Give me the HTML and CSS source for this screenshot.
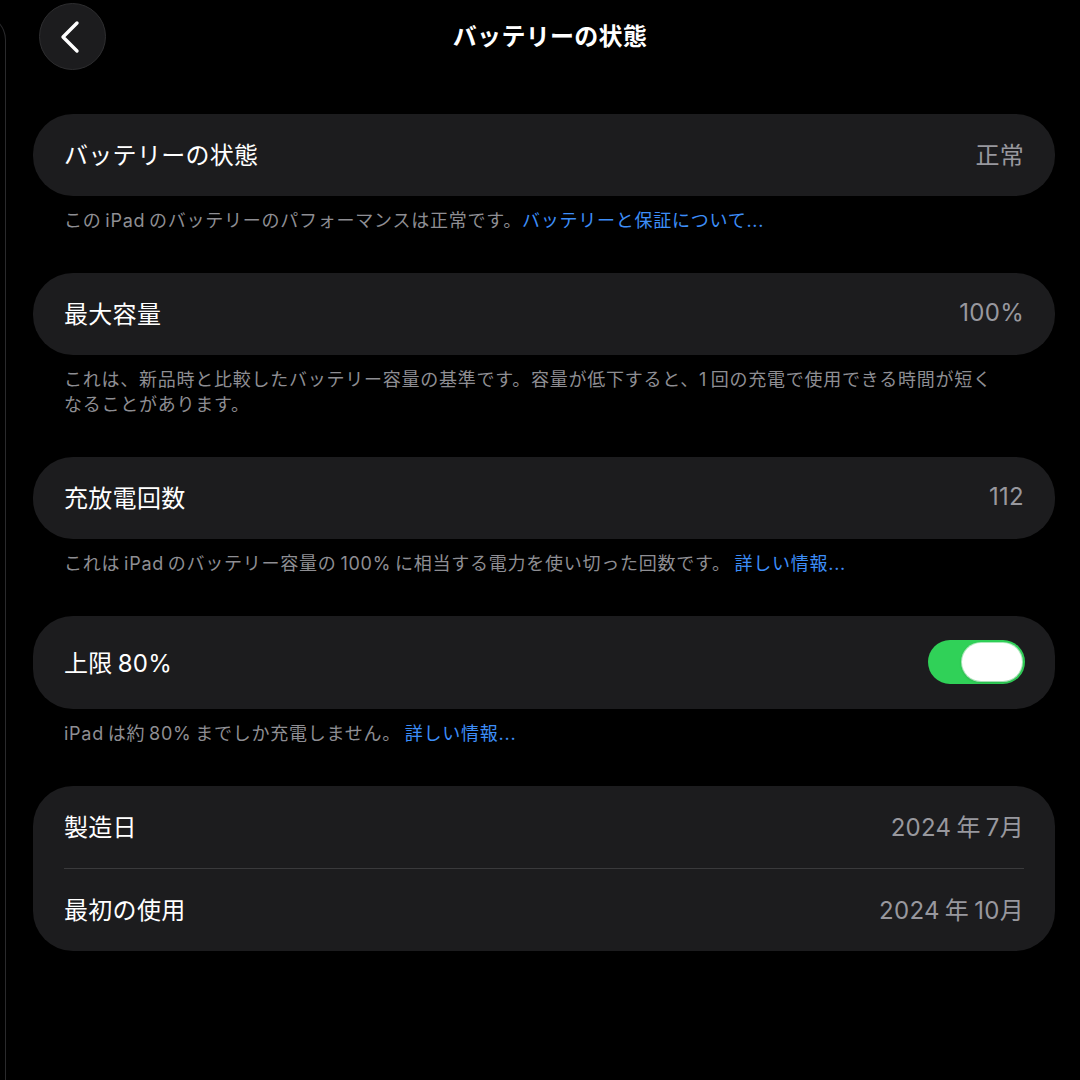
FILE: index.html
```html
<!DOCTYPE html>
<html lang="ja">
<head>
<meta charset="utf-8">
<title>バッテリーの状態</title>
<link rel="stylesheet" href="styles.css">
</head>
<body>
<div class="sidebar-edge"></div>
<main class="main">
  <header class="header">
    <div class="header-left">
      <button class="back-btn" aria-label="戻る">
        <svg width="24" height="34" viewBox="0 0 24 34"><path d="M18 3 L4 17 L18 31" fill="none" stroke="#fff" stroke-width="3.4" stroke-linecap="round" stroke-linejoin="round"/></svg>
      </button>
    </div>
    <h1 class="title">バッテリーの状態</h1>
    <div></div>
  </header>

  <div class="content">
    <section class="section">
      <div class="card">
        <div class="row"><span class="label">バッテリーの状態</span><span class="value">正常</span></div>
      </div>
      <p class="footer">この iPad のバッテリーのパフォーマンスは正常です。<span class="link">バッテリーと保証について...</span></p>
    </section>

    <section class="section">
      <div class="card">
        <div class="row"><span class="label">最大容量</span><span class="value">100%</span></div>
      </div>
      <p class="footer">これは、新品時と比較したバッテリー容量の基準です。容量が低下すると、1 回の充電で使用できる時間が短く<br>なることがあります。</p>
    </section>

    <section class="section">
      <div class="card">
        <div class="row"><span class="label">充放電回数</span><span class="value">112</span></div>
      </div>
      <p class="footer">これは iPad のバッテリー容量の 100% に相当する電力を使い切った回数です。 <span class="link">詳しい情報...</span></p>
    </section>

    <section class="section">
      <div class="card">
        <div class="row row-tall"><span class="label">上限 80%</span>
          <span class="toggle on"><span class="knob"></span></span>
        </div>
      </div>
      <p class="footer">iPad は約 80% までしか充電しません。 <span class="link">詳しい情報...</span></p>
    </section>

    <section class="section">
      <div class="card">
        <div class="row"><span class="label">製造日</span><span class="value">2024 年 7月</span></div>
        <div class="divider"></div>
        <div class="row"><span class="label">最初の使用</span><span class="value">2024 年 10月</span></div>
      </div>
    </section>
  </div>
</main>
</body>
</html>
```

FILE: styles.css
```css
* { box-sizing: border-box; }

html, body {
  margin: 0;
  padding: 0;
  background: #000;
  height: 100%;
}

body {
  display: flex;
  font-family: "Inter", "Noto Sans CJK JP", sans-serif;
  color: #fff;
  overflow: hidden;
}

.sidebar-edge {
  flex: 0 0 auto;
  width: 34px;
  margin-left: -28px;
  margin-top: 14px;
  border-top: 1.5px solid #2a2a2c;
  border-right: 1.5px solid #2a2a2c;
  border-top-right-radius: 26px;
  margin-right: 14px;
}

.main {
  flex: 1 1 auto;
  display: flex;
  flex-direction: column;
}

.header {
  display: grid;
  grid-template-columns: 1fr auto 1fr;
  align-items: center;
  height: 74px;
  padding-top: 3px;
  padding-bottom: 4px;
  margin-bottom: 40px;
}

.header-left {
  padding-left: 19px;
}

.back-btn {
  width: 67px;
  height: 67px;
  border-radius: 50%;
  background: #1c1c1e;
  border: 1px solid #2e2e30;
  display: flex;
  align-items: center;
  justify-content: center;
  padding: 0 4px 0 0;
  margin: 0;
  cursor: pointer;
}

.title {
  margin: 0 0 4px;
  font-size: 24px;
  font-weight: 700;
  letter-spacing: 0.3px;
  color: #fff;
}

.content {
  padding: 0 25px 0 13px;
  display: flex;
  flex-direction: column;
  gap: 40px;
}

.card {
  background: #1c1c1e;
  border-radius: 40px;
  padding: 0 31px;
}

.row {
  display: flex;
  align-items: center;
  justify-content: space-between;
  height: 82px;
  padding-bottom: 4px;
}

.row-tall {
  height: 93px;
  padding-bottom: 2px;
}

.label {
  font-size: 24px;
  color: #fff;
  letter-spacing: 0.3px;
  word-spacing: -2px;
}

.value {
  font-size: 24px;
  color: #98989e;
  letter-spacing: 0.3px;
  word-spacing: -2px;
}

.divider {
  height: 1px;
  background: #3a3a3c;
}

.footer {
  margin: 12px 0 0;
  padding-left: 31px;
  font-size: 18px;
  line-height: 25px;
  color: #8e8e93;
  letter-spacing: 0.75px;
  word-spacing: -2px;
}

.link {
  color: #3d8ef8;
}

.toggle {
  position: relative;
  width: 97px;
  height: 44px;
  border-radius: 22px;
  background: #30d158;
  display: inline-block;
  margin-right: -1px;
}

.knob {
  position: absolute;
  right: 3px;
  top: 3px;
  width: 60px;
  height: 38px;
  border-radius: 19px;
  background: #fff;
  box-shadow: 0 0 0 1px rgba(255,255,255,0.6), 0 1px 3px rgba(0,0,0,0.25);
}
```
